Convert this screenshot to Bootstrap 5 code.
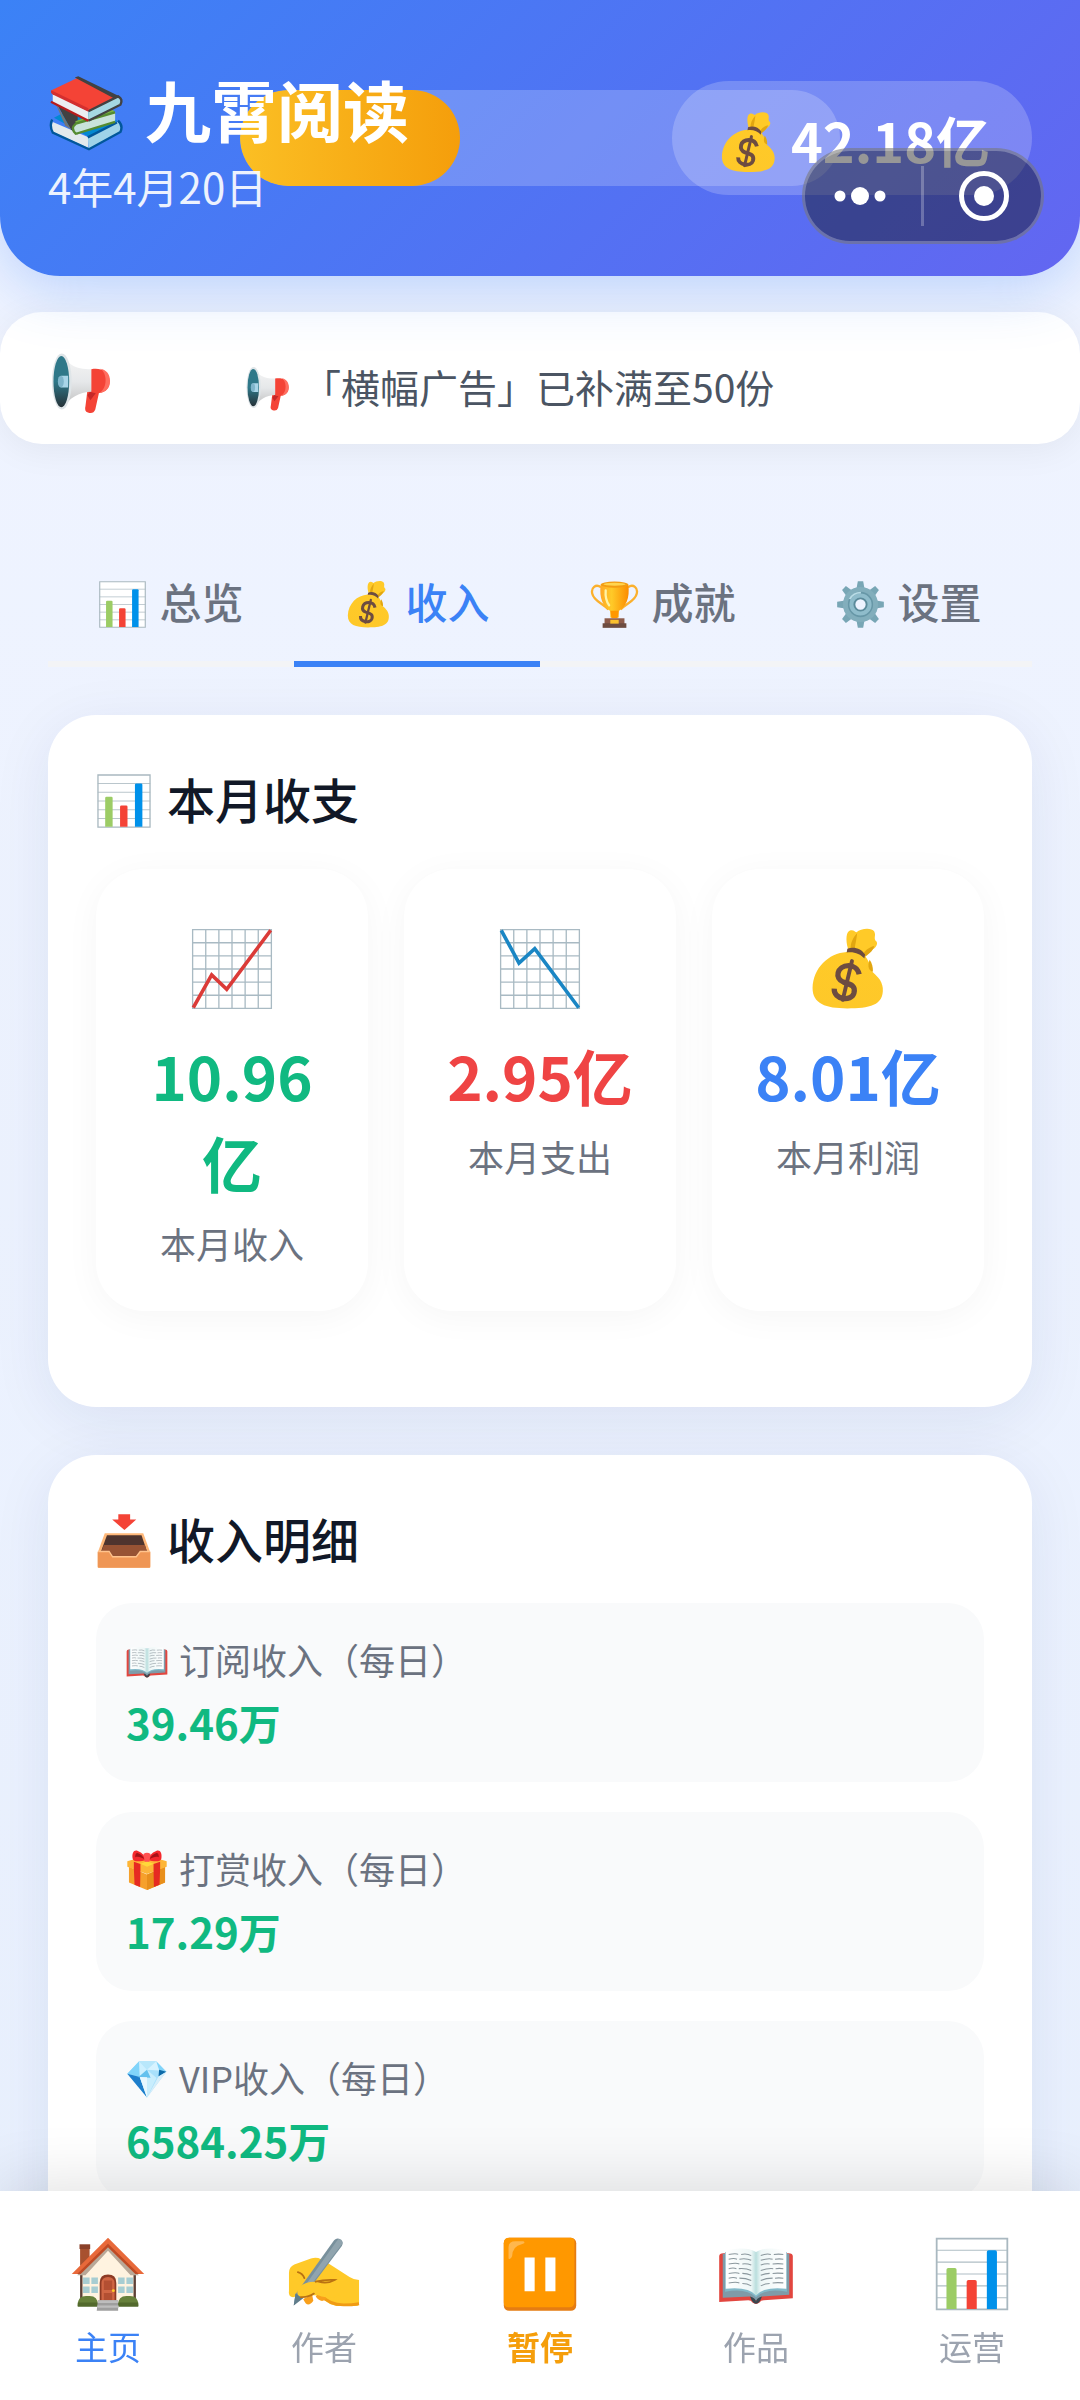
<!DOCTYPE html>
<html lang="zh-CN">
<head>
<meta charset="utf-8">
<meta name="viewport" content="width=device-width, initial-scale=1">
<title>九霄阅读</title>
<link href="https://cdn.jsdelivr.net/npm/bootstrap@5.3.0/dist/css/bootstrap.min.css" rel="stylesheet">
<style>
  body { font-family: "Noto Sans CJK SC", "Noto Sans", sans-serif; color: #111827; background: linear-gradient(180deg, #f0f4ff, #e8f0fe) fixed; min-height: 100vh; }
  .emo { flex: none; display: block; overflow: visible; }
  .emo-42 { width: 42px; height: 42px; }
  .emo-46 { width: 46px; height: 46px; }
  .emo-49 { width: 49px; height: 49px; }
  .emo-56 { width: 56px; height: 56px; }
  .emo-63 { width: 63px; height: 63px; }
  .emo-76 { width: 76px; height: 76px; }
  .emo-84 { width: 84px; height: 84px; }

  .app-header { padding: 60px 48px; border-radius: 0 0 60px 60px; background: linear-gradient(135deg, #3b82f6, #6366f1); color: #fff; box-shadow: 0 12px 60px rgba(59, 130, 246, .3); }
  .app-title { font-size: 66px; line-height: 96px; font-weight: 700; gap: 21px; }
  .app-title .emo { margin-top: 10px; }
  .app-date { font-size: 42px; line-height: 60px; opacity: .9; }
  .level-track { top: 90px; left: 240px; right: 240px; height: 96px; border-radius: 48px; background: rgba(255, 255, 255, .2); overflow: hidden; }
  .level-fill { height: 100%; border-radius: 48px; background: linear-gradient(90deg, #fbbf24, #f59e0b); }
  .money-pill { height: 114px; padding: 4px 42px 0 45px; gap: 11px; border-radius: 57px; background: rgba(255, 255, 255, .2); font-size: 54px; line-height: 78px; font-weight: 700; }
  .money-pill .emo { margin-top: 4px; }
  .capsule { top: 148px; right: 36px; width: 242px; height: 96px; padding: 0 31px 0 28px; border-radius: 48px; background: rgba(15, 15, 15, .43); border: 3px solid rgba(255, 255, 255, .25); }
  .capsule button { display: flex; border: 0; background: none; padding: 0; }
  .capsule .sep-line { width: 3px; height: 60px; background: rgba(255, 255, 255, .25); }

  .notice { margin-top: 36px; height: 132px; padding: 10px 50px 0; border-radius: 42px; background: #fff; box-shadow: 0 6px 36px rgba(0, 0, 0, .06); }
  .notice-msg { margin: 6px 0 0 132px; gap: 11px; font-size: 39px; line-height: 57px; color: #4b5563; }
  .notice-msg .emo { margin-top: 6px; }

  main { padding: 97px 48px 0; }
  .tab-row { border-bottom: 6px solid #f3f4f6; }
  .tab-row .tab-btn { border: 0; background: none; padding: 30px 0; margin-bottom: -6px; border-bottom: 6px solid transparent; gap: 12px; font-size: 42px; line-height: 60px; font-weight: 500; color: #6b7280; }
  .tab-row .emo { margin-top: 6px; }
  .tab-row .tab-btn.active { color: #3b82f6; border-color: #3b82f6; }

  .panel { margin-top: 48px; padding: 48px; border-radius: 48px; background: #fff; box-shadow: 0 12px 60px rgba(30, 41, 99, .08); }
  .panel-title { margin: 0; gap: 15px; font-size: 48px; line-height: 70px; font-weight: 500; }
  .panel-title .emo { margin-top: 6px; }
  .stat-row { margin: 36px 0 48px; gap: 36px; }
  .stat { flex: 1 1 0; min-width: 0; padding: 48px 36px 42px; border-radius: 48px; background: #fff; box-shadow: 0 6px 36px rgba(0, 0, 0, .04); }
  .stat-icon { height: 104px; }
  .stat-num { margin-top: 10px; font-size: 60px; line-height: 87px; font-weight: 700; }
  .stat-label { margin-top: 12px; font-size: 36px; line-height: 52px; color: #6b7280; }
  .c-green { color: #10b981; } .c-red { color: #ef4444; } .c-blue { color: #3b82f6; }

  .income-list { margin-top: 30px; gap: 30px; }
  .income { padding: 30px; border-radius: 36px; background: #f9fafb; }
  .income-name { gap: 11px; font-size: 36px; line-height: 52px; color: #6b7280; }
  .income-name .emo { margin-top: 4px; }
  .income-sum { margin-top: 6px; font-size: 42px; line-height: 61px; font-weight: 700; }

  .tabbar { padding: 45px 0 30px; background: #fff; box-shadow: 0 -6px 60px rgba(0, 0, 0, .12); }
  .tabbar a { gap: 10px; font-size: 33px; line-height: 48px; color: #9ca3af; text-decoration: none; }
  .tabbar a.active { color: #3b82f6; }
  .tabbar a.paused { color: #f59e0b; font-weight: 600; }
</style>
</head>
<body>

<svg class="position-absolute" width="0" height="0" aria-hidden="true">
  <defs>
    <linearGradient id="g-bag" x1="0" y1="0" x2="0" y2="1"><stop offset="0" stop-color="#ffca28"/><stop offset="1" stop-color="#fec829"/></linearGradient>
    <linearGradient id="g-cone" x1="0" y1="0" x2="0" y2="1"><stop offset="0" stop-color="#f5f5f5"/><stop offset=".5" stop-color="#e6e8ea"/><stop offset="1" stop-color="#bdbdbd"/></linearGradient>
    <linearGradient id="g-bell" x1="0" y1="0" x2="0" y2="1"><stop offset="0" stop-color="#2f7889"/><stop offset=".5" stop-color="#2f7889"/><stop offset="1" stop-color="#263238"/></linearGradient>
    <linearGradient id="g-cup" x1="0" y1="0" x2="1" y2="0"><stop offset="0" stop-color="#ffa726"/><stop offset=".4" stop-color="#ffca28"/><stop offset="1" stop-color="#fb8c00"/></linearGradient>
    <linearGradient id="g-page" x1="0" y1="0" x2="1" y2="0"><stop offset="0" stop-color="#fff"/><stop offset=".42" stop-color="#eef7f7"/><stop offset=".5" stop-color="#b9dedd"/><stop offset=".58" stop-color="#eef7f7"/><stop offset="1" stop-color="#fff"/></linearGradient>
  </defs>

  <symbol id="i-bars" viewBox="0 0 128 128">
    <path d="M4 4h120v120H4z" fill="#fff"/>
    <path d="M4 24h120M4 44h120M4 64h120M4 84h120M4 104h120" stroke="#b0bec5" stroke-width="2"/>
    <path d="M4.500 4.500h119v119h-119z" fill="none" stroke="#a9b8c0" stroke-width="3"/>
    <path d="M21 123V57q0-3 3-3h11q3 0 3 3v66z" fill="#9ccc65"/>
    <path d="M55 123V77q0-3 3-3h11q3 0 3 3v46z" fill="#f44336"/>
    <path d="M89 123V27q0-3 3-3h11q3 0 3 3v96z" fill="#0091ea"/>
  </symbol>
  <symbol id="i-grid" viewBox="0 0 128 128">
    <path d="M4 4h120v120H4z" fill="#fff"/>
    <path d="M24 4v120M44 4v120M64 4v120M84 4v120M104 4v120M4 24h120M4 44h120M4 64h120M4 84h120M4 104h120M4 4h120v120H4z" fill="none" stroke="#a9bac3" stroke-width="2"/>
  </symbol>
  <symbol id="i-up" viewBox="0 0 128 128">
    <use href="#i-grid"/>
    <path d="M5 123 33 73l23 22L123 5" fill="none" stroke="#db3b38" stroke-width="5.500"/>
  </symbol>
  <symbol id="i-down" viewBox="0 0 128 128">
    <use href="#i-grid"/>
    <path d="M5 5l27 50 24-22 67 90" fill="none" stroke="#1a86c4" stroke-width="5.500"/>
  </symbol>
  <symbol id="i-bag" viewBox="0 0 128 128">
    <path d="M64 33C60 20 61 6 68 5c5-1 7 3 9 3C83 2 100 0 104 7c3 6-1 9 2 14 5 3 1 10-4 13l-14 12z" fill="#ffca28"/>
    <path d="M68 33c0-9 3-16 10-24-1 10-3 17-4 25zM86 43c3-6 9-12 18-14-2 8-9 13-15 17z" fill="#e2a610"/>
    <path d="M62 38C34 40 11 62 10 93c0 24 20 31 53 31s56-4 54-31c-1-13-11-20-16-25-5-16-10-27-20-30z" fill="url(#g-bag)"/>
    <path d="M97 50c4 6 5 11 5 18-6-1-9-7-5-18z" fill="#e2a610"/>
    <path d="M63 33c10-4 22 0 27 9l-1 6c-6-7-17-11-27-9z" fill="#6d4c41"/>
    <g fill="none" stroke="#6d4c41"><path d="M81 72c-2-9-9-13-16-13-18 0-22 20-8 25 13 4 19 6 16 17-4 13-31 10-30-7" stroke-width="8"/><path d="M70 52 56 111" stroke-width="6" stroke-linecap="round"/></g>
  </symbol>
  <symbol id="i-books" viewBox="0 0 128 128">
    <path d="M10 72 52 50l65 27-47 28z" fill="#0288d1"/>
    <path d="M8 79 68 105v18L8 96q-5-9 0-17z" fill="#e3e9ec"/>
    <path d="M67 105 117 79q8 5 5 16l-53 29z" fill="#9fd3e8"/>
    <path d="M7 75q-5 10 1 22l61 28 53-29q5-11-4-19" fill="none" stroke="#01579b" stroke-width="4"/>
    <path d="M67 105 116 80" stroke="#01579b" stroke-width="4"/>
    <path d="M10 40 50 62v38L39 92z" fill="#424242"/>
    <path d="M10 42 39 92l-10-7z" fill="#757575"/>
    <path d="M46 78 103 57l10 4-65 23z" fill="#7cb342"/>
    <path d="M46 83 113 63v16L48 99q-10-8-2-16z" fill="#c9e3da"/>
    <path d="M113 63 47 82q-10 8 0 17l66-20" fill="none" stroke="#558b2f" stroke-width="4"/>
    <path d="M5 26 51 4l66 34-47 24z" fill="#f44336"/>
    <path d="M45 4 51 2l70 34-7 5z" fill="#424242"/>
    <path d="M8 31 68 61v16L8 47z" fill="#eceff1"/>
    <path d="M68 61 118 36q7 6 3 14L68 76z" fill="#a5d8e3"/>
    <path d="M68 61 118 36q9 5 4 14L68 77" fill="none" stroke="#424242" stroke-width="4"/>
    <path d="M5 26q-1 4 3 7l60 29v-6L8 27z" fill="#d32f2f"/>
    <path d="M5 45 68 77" stroke="#b71c1c" stroke-width="4"/>
  </symbol>
  <symbol id="i-horn" viewBox="0 0 128 128">
    <path d="M76 78l25-2-9 41q-4 10-15 6-8-3-5-13z" fill="#f44336"/>
    <path d="M76 88l6-9 11 5-11 14z" fill="#c62828"/>
    <path d="M26 6c10 17 22 29 59 29v46c-27 0-47 14-59 34z" fill="url(#g-cone)"/>
    <path d="M84 35c19-3 36 3 37 25 0 20-18 27-37 22z" fill="#f44336"/>
    <path d="M102 34c14 7 16 40-2 49 14-1 22-10 22-24 0-15-8-23-20-25z" fill="#ff6e60"/>
    <ellipse cx="24" cy="60" rx="20" ry="57" fill="#dfe5e8"/>
    <ellipse cx="23" cy="60" rx="16" ry="52" fill="url(#g-bell)"/>
    <path d="M23 48h14v24H23q-6-2-6-12t6-12z" fill="#a9d5e8"/>
    <ellipse cx="22" cy="60" rx="6" ry="12" fill="#7fb5cb"/>
  </symbol>
  <symbol id="i-cup" viewBox="0 0 128 128">
    <g fill="none" stroke="#fbb02d" stroke-width="6"><path d="M29 19C15 9 2 20 6 36c4 19 25 23 42 41M99 19c14-10 27 1 23 17-4 19-25 23-42 41"/></g>
    <path d="M28 12h72c5 37-7 59-25 69v17H53V81C35 71 23 49 28 12z" fill="url(#g-cup)"/>
    <ellipse cx="64" cy="12" rx="36" ry="8" fill="#f39c12"/><ellipse cx="64" cy="11" rx="29" ry="4" fill="#ffd54f"/>
    <path d="M41 27q-2 24 9 39" fill="none" stroke="#fff3a5" stroke-width="6" stroke-linecap="round"/>
    <path d="M53 80h22l-3 20H56z" fill="#ff9800"/>
    <path d="M38 100h52v15H38z" fill="#8d5b4a"/><path d="M33 113h62v12H33z" fill="#6d4c41"/><path d="M53 104h22v10H53z" fill="#fbc02d"/>
  </symbol>
  <symbol id="i-gear" viewBox="0 0 128 128">
    <g fill="#78a6b5"><path id="tooth" d="M54 20 57 3h14l3 17v88l-3 17H57l-3-17z"/><use href="#tooth" transform="rotate(45 64 64)"/><use href="#tooth" transform="rotate(90 64 64)"/><use href="#tooth" transform="rotate(135 64 64)"/></g>
    <circle cx="64" cy="64" r="46" fill="#82aebc"/>
    <circle cx="64" cy="64" r="31" fill="#8fbccb" stroke="#6797a7" stroke-width="4"/>
    <circle cx="64" cy="64" r="16" fill="#eef3ff" stroke="#5c8b9b" stroke-width="5"/>
    <path d="M36 50q9-17 29-17" stroke="#b9dce6" stroke-width="5" fill="none"/>
  </symbol>
  <symbol id="i-tray" viewBox="0 0 128 128">
    <path d="M51 3h27v12h14L65 39 37 15h14z" fill="#f44336"/>
    <path d="M20 46h88l16 44v35H4V90z" fill="#ffb879"/>
    <path d="M25 51h79l13 38-21 10H34L11 89z" fill="#4e342e"/>
    <path d="M18 73h94l5 18-23 9H35L11 91z" fill="#975334"/>
    <path d="M4 88h26l8 12h54l9-12h23v34q0 3-3 3H7q-3 0-3-3z" fill="#ef9655"/>
    <path d="M5 88h25l8 12h54l9-12h22" stroke="#ffc38d" stroke-width="3" fill="none"/>
  </symbol>
  <symbol id="i-book" viewBox="0 0 128 128">
    <path d="M2 34q0-5 7-5h110q7 0 7 5v71l-49 3q-5 0-7 4-6 5-12 0-2-4-7-4l-49 3z" fill="#e2463f"/>
    <path d="M8 30h112v69l-46 3-10 7-10-7-46 2z" fill="#7f9ba8"/>
    <path d="M12 27v67q35-7 52 9 17-16 52-9V27z" fill="#82b9c9"/>
    <path d="M13 24q35-7 51 3 16-10 51-3v65q-38-4-51 11Q51 85 13 89z" fill="url(#g-page)"/>
    <path d="M18 31q13-2 16 0m5 0q10-2 17 2M18 39q9-2 14 0m4 0q12-2 20 2M18 47q13-2 18 0m5 0q8-1 15 2M18 55q8-2 13 0m4 0q12-1 21 3M18 63q13-2 18 0m5 0q8 0 15 3M18 71q8-2 14 0m4 0q11 0 20 4M18 79q13-2 18 0m5 1q8 0 15 4M72 33q9-4 17-2m5 0q8-1 16 0M72 41q12-4 20-2m4 0q7-1 14 0M72 49q8-3 15-2m5 0q9-1 18 0M72 58q12-4 21-3m4 0q6-1 13 0M72 66q8-3 15-3m5 0q8-1 18 0M72 75q9-4 20-4m4 0q6-1 14 0M72 84q8-4 15-4m5-1q8-1 18 0" fill="none" stroke="#8b989e" stroke-width="1.800"/>
    <path d="M54 102q10 3 10 9 0-6 10-9-4 12-10 12t-10-12z" fill="#37474f"/>
  </symbol>
  <symbol id="i-gift" viewBox="0 0 128 128">
    <path d="M9 54 64 78l55-24v48l-55 23L9 102z" fill="#f6a02b"/>
    <path d="M64 78l55-24v48l-55 23z" fill="#e88f1b"/>
    <path d="M4 37 64 20l60 17v17L64 76 4 54z" fill="#fdb537"/>
    <path d="M44 45 64 37l21 8-21 9z" fill="#ffd83a"/>
    <path d="M24 39l20 7v20l-1 50-17-7-2-49zM104 39l-20 7v20l1 50 17-7 2-49z" fill="#e62a22"/>
    <path d="M62 34C45 37 22 42 20 28 18 12 24 1 36 6c14 5 22 16 26 28zM66 34c17 3 40 8 42-6 2-16-4-27-16-22-14 5-22 16-26 28z" fill="#f5282c"/>
    <path d="M28 25c0-9 3-14 9-12 9 3 15 10 20 18-11-6-20-9-29-6zM100 25c0-9-3-14-9-12-9 3-15 10-20 18 11-6 20-9 29-6z" fill="#a51218"/>
    <path d="M53 15q11-7 22 0l-4 24H57z" fill="#ff5151"/>
  </symbol>
  <symbol id="i-gem" viewBox="0 0 128 128">
    <path d="M40 10h52l31 32-59 78L4 48z" fill="#a8e0fb"/>
    <path d="M40 10 4 48l38 10zM92 10l9 26 22 6z" fill="#81d4fa"/>
    <path d="M40 10h52l-28 26z" fill="#b8e7fb"/><path d="M40 10l24 26-22 22z" fill="#cdf0ff"/><path d="M92 10 64 36l37 2z" fill="#d7f3ff"/>
    <path d="M4 48l38 10 22 62z" fill="#1e7ecb"/><path d="M42 58 64 36l29 25-29 59z" fill="#c8edfd"/>
    <path d="M64 36 37 59l38 1z" fill="#64c1ee"/><path d="M101 36l22 6-24 14z" fill="#0d6aa8"/><path d="M99 56l24-14-59 78z" fill="#d7eefa"/>
    <path d="M42 58l22 62V59z" fill="#e8f7fe"/>
  </symbol>
  <symbol id="i-house" viewBox="0 0 128 128">
    <path d="M17 15h16v35H17z" fill="#a8512f"/><path d="M16 14h18v8H16z" fill="#8a4029"/>
    <path d="M18 60 64 15l46 45v52H18z" fill="#fff3e0"/>
    <path d="M17 55h4v57h-4zM107 55h4v57h-4z" fill="#5d4037"/>
    <path d="M64 15 12 66h14l38-41 38 41h14z" fill="#b8a898"/>
    <path d="M64 3 3 64h14l47-46 47 46h14z" fill="#e8693a"/><path d="M64 13 12 64h6l46-45 46 45h6z" fill="#bf4b25"/>
    <path d="M50 114V79q0-14 14-14t14 14v35z" fill="#8d3a24"/><path d="M53 114V80q0-11 11-11t11 11v34z" fill="#d06644"/><path d="M57 75h14v16H57zM57 96h14v13H57z" fill="#b34f32"/><circle cx="73" cy="92" r="2.500" fill="#ffca28"/>
    <g fill="#a7cdd2"><path d="M22 70h11v11H22zM36 70h11v11H36zM22 85h11v11H22zM36 85h11v11H36zM81 70h11v11H81zM95 70h11v11H95zM81 85h11v11H81zM95 85h11v11H95z"/></g>
    <path d="M13 116q0-15 14-15h6q14 0 14 15v2H13zM81 118v-2q0-15 14-15h6q14 0 14 15v2z" fill="#66803a"/><path d="M13 112h34v7H13zM81 112h34v7H81z" fill="#52692c"/>
    <path d="M47 108h34v18H45z" fill="#9e9e9e"/><path d="M47 108h34v5H47zM46 117h36v4H46z" fill="#bdbdbd"/>
  </symbol>
  <symbol id="i-write" viewBox="0 0 128 128">
    <path d="M5 92V62q0-10 9-14l28-10q9-3 17 1l14 8 34 22q6 4 16 5v39q0 5-5 5H92q-20 0-36-18l-36-1q-6 6-12 3-4-3-3-10z" fill="#ffc928"/>
    <path d="M123 114q-12 2-26 2-24 0-39-17" fill="none" stroke="#f09b14" stroke-width="5"/>
    <path d="M29 106q7 17 17 3l-2-10zM50 102q10 13 18 3l-11-12z" fill="#f9a01b"/>
    <path d="M81 7q5-5 11-1 6 4 2 11L32 99l-19 18 3-19z" fill="#78909c"/><path d="M88 5q8 1 6 9L32 96l-6-4z" fill="#90a4ae"/>
    <path d="M13 117l3-20 13 8z" fill="#607d8b"/>
    <path d="M19 94q0-10 15-15 12-4 32 0l24 20q-10 8-30 3-10-4-14-4-12 6-20 5-7-2-7-9z" fill="#ffc928"/>
    <path d="M50 77q14-4 32-3-12 7-27 3M20 61q8 2 11 10M25 103q12 1 22-6" fill="none" stroke="#b97212" stroke-width="3" stroke-linecap="round"/>
  </symbol>
  <symbol id="i-pause" viewBox="0 0 128 128">
    <rect x="3" y="3" width="122" height="123" rx="9" fill="#e57c12"/>
    <path d="M3 12q0-9 9-9h104q6 0 6 7v101q0 9-9 9H11q-8 0-8-8z" fill="#ff9800"/>
    <path d="M11 38V19q0-10 12-10h13q5 3-3 5-15 3-16 20-3 7-6 4z" fill="#ffb74d"/>
    <path d="M38 36h17v57H38zM73 36h17v57H73z" fill="#fff"/>
  </symbol>
  <symbol id="i-dots" viewBox="0 0 54 22"><g fill="#fff"><circle cx="7" cy="11" r="5.500"/><circle cx="27" cy="11" r="9"/><circle cx="47" cy="11" r="5.500"/></g></symbol>
  <symbol id="i-target" viewBox="0 0 52 52"><circle cx="26" cy="26" r="22.500" fill="none" stroke="#fff" stroke-width="5"/><circle cx="26" cy="26" r="10" fill="#fff"/></symbol>
</svg>

<header class="app-header position-relative d-flex align-items-center justify-content-between">
  <div class="level-track position-absolute" role="progressbar" aria-valuenow="37" aria-valuemin="0" aria-valuemax="100" aria-label="进度">
    <div class="level-fill" style="width: 36.7%"></div>
  </div>
  <div class="position-relative">
    <h1 class="app-title d-flex align-items-center m-0"><svg class="emo emo-76"><use href="#i-books"/></svg>九霄阅读</h1>
    <div class="app-date">4年4月20日</div>
  </div>
  <div class="money-pill position-relative d-flex align-items-center"><svg class="emo emo-63"><use href="#i-bag"/></svg>42.18亿</div>
  <div class="capsule position-absolute d-flex align-items-center justify-content-between">
    <button type="button" aria-label="更多"><svg width="54" height="22"><use href="#i-dots"/></svg></button>
    <span class="sep-line"></span>
    <button type="button" aria-label="关闭"><svg width="52" height="52"><use href="#i-target"/></svg></button>
  </div>
</header>

<section class="notice d-flex align-items-center" aria-label="公告">
  <svg class="emo emo-63"><use href="#i-horn"/></svg>
  <div class="notice-msg d-flex align-items-center"><svg class="emo emo-46"><use href="#i-horn"/></svg>「横幅广告」已补满至50份</div>
</section>

<main>
  <div class="tab-row d-flex" role="tablist">
    <button class="tab-btn col d-flex align-items-center justify-content-center" role="tab" type="button"><svg class="emo emo-49"><use href="#i-bars"/></svg>总览</button>
    <button class="tab-btn col d-flex align-items-center justify-content-center active" role="tab" type="button" aria-selected="true"><svg class="emo emo-49"><use href="#i-bag"/></svg>收入</button>
    <button class="tab-btn col d-flex align-items-center justify-content-center" role="tab" type="button"><svg class="emo emo-49"><use href="#i-cup"/></svg>成就</button>
    <button class="tab-btn col d-flex align-items-center justify-content-center" role="tab" type="button"><svg class="emo emo-49"><use href="#i-gear"/></svg>设置</button>
  </div>

  <section class="panel">
    <h2 class="panel-title d-flex align-items-center"><svg class="emo emo-56"><use href="#i-bars"/></svg>本月收支</h2>
    <div class="stat-row d-flex text-center">
      <div class="stat">
        <div class="stat-icon d-flex align-items-center justify-content-center"><svg class="emo emo-84"><use href="#i-up"/></svg></div>
        <div class="stat-num c-green">10.96亿</div>
        <div class="stat-label">本月收入</div>
      </div>
      <div class="stat">
        <div class="stat-icon d-flex align-items-center justify-content-center"><svg class="emo emo-84"><use href="#i-down"/></svg></div>
        <div class="stat-num c-red">2.95亿</div>
        <div class="stat-label">本月支出</div>
      </div>
      <div class="stat">
        <div class="stat-icon d-flex align-items-center justify-content-center"><svg class="emo emo-84"><use href="#i-bag"/></svg></div>
        <div class="stat-num c-blue">8.01亿</div>
        <div class="stat-label">本月利润</div>
      </div>
    </div>
  </section>

  <section class="panel">
    <h2 class="panel-title d-flex align-items-center"><svg class="emo emo-56"><use href="#i-tray"/></svg>收入明细</h2>
    <div class="income-list d-flex flex-column">
      <div class="income">
        <div class="income-name d-flex align-items-center"><svg class="emo emo-42"><use href="#i-book"/></svg>订阅收入（每日）</div>
        <div class="income-sum c-green">39.46万</div>
      </div>
      <div class="income">
        <div class="income-name d-flex align-items-center"><svg class="emo emo-42"><use href="#i-gift"/></svg>打赏收入（每日）</div>
        <div class="income-sum c-green">17.29万</div>
      </div>
      <div class="income">
        <div class="income-name d-flex align-items-center"><svg class="emo emo-42"><use href="#i-gem"/></svg>VIP收入（每日）</div>
        <div class="income-sum c-green">6584.25万</div>
      </div>
    </div>
  </section>
</main>

<nav class="tabbar fixed-bottom d-flex" aria-label="主导航">
  <a class="col d-flex flex-column align-items-center active" href="#home" aria-current="page"><svg class="emo emo-76"><use href="#i-house"/></svg>主页</a>
  <a class="col d-flex flex-column align-items-center" href="#authors"><svg class="emo emo-76"><use href="#i-write"/></svg>作者</a>
  <a class="col d-flex flex-column align-items-center paused" href="#pause"><svg class="emo emo-76"><use href="#i-pause"/></svg>暂停</a>
  <a class="col d-flex flex-column align-items-center" href="#works"><svg class="emo emo-76"><use href="#i-book"/></svg>作品</a>
  <a class="col d-flex flex-column align-items-center" href="#ops"><svg class="emo emo-76"><use href="#i-bars"/></svg>运营</a>
</nav>

<script src="https://cdn.jsdelivr.net/npm/bootstrap@5.3.0/dist/js/bootstrap.bundle.min.js"></script>
</body>
</html>
